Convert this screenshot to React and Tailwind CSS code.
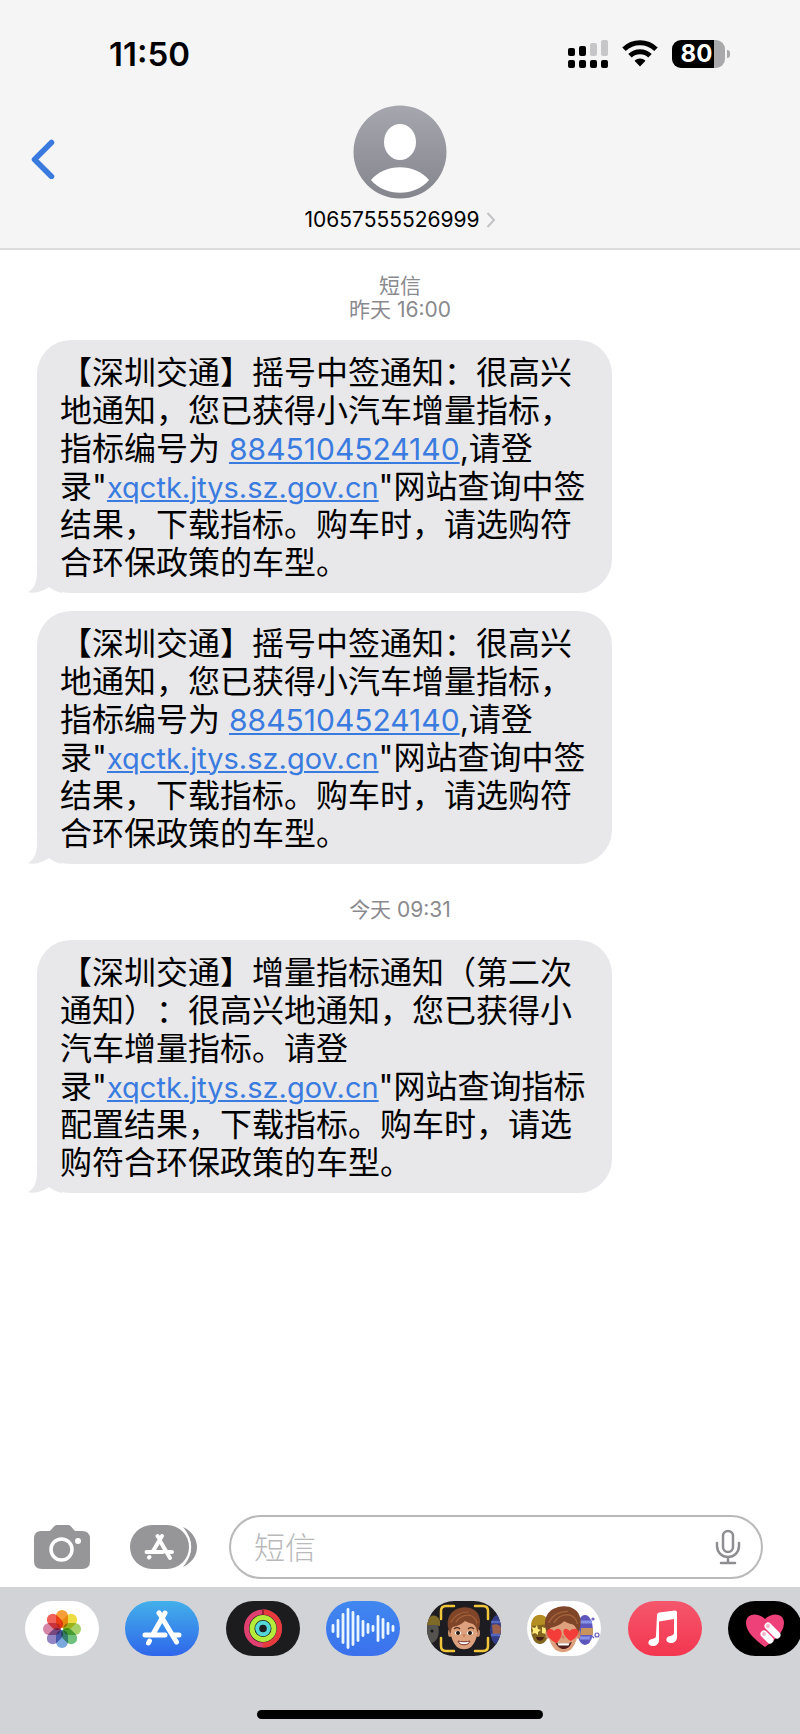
import { useState } from 'react'

const MESSAGE_GROUPS = [
  {
    label: '短信',
    time: '昨天 16:00',
    messages: [
      { id: 1, kind: 'lottery', code: '8845104524140' },
      { id: 2, kind: 'lottery', code: '8845104524140' },
    ],
  },
  {
    time: '今天 09:31',
    messages: [{ id: 3, kind: 'reminder' }],
  },
]

const PETALS = [
  { angle: 0, color: '#f79420' },
  { angle: 45, color: '#ecd830' },
  { angle: 90, color: '#9bcb5a' },
  { angle: 135, color: '#5fb96f' },
  { angle: 180, color: '#6d9fdc' },
  { angle: 225, color: '#8579bd' },
  { angle: 270, color: '#d0799f' },
  { angle: 315, color: '#ee5047' },
]

// [x, half height]
const WAVE_BARS = [
  [7, 3], [12, 8], [17, 14], [22, 19], [27, 16], [32, 12], [37, 7], [42, 4], [47, 2], [52, 12], [57, 9], [62, 5], [67, 2],
]

function StatusBar() {
  return (
    <div className="flex h-[96px] items-center justify-between pl-[109px] pr-[70px] pt-3">
      <time className="text-[33px] font-semibold leading-10">11:50</time>
      <div className="flex items-center gap-[14px]">
        <svg width="40" height="28" viewBox="0 0 40 28" aria-label="信号">
          <rect x="0" y="8" width="7" height="8" rx="2" />
          <rect x="11" y="6" width="7" height="10" rx="2" />
          <rect x="22" y="3" width="7" height="13" rx="2" fill="#c6c6c8" />
          <rect x="33" y="0" width="7" height="16" rx="2" fill="#c6c6c8" />
          <rect x="0" y="20" width="7" height="8" rx="2" />
          <rect x="11" y="20" width="7" height="8" rx="2" />
          <rect x="22" y="20" width="7" height="8" rx="2" />
          <rect x="33" y="20" width="7" height="8" rx="2" />
        </svg>
        <svg width="36" height="28" viewBox="0 0 36 28" fill="none" stroke="#000" strokeWidth="5" aria-label="无线网络">
          <path d="M2 9.3A23 23 0 0 1 34 9.3" />
          <path d="M8 15.7A14.5 14.5 0 0 1 28 15.7" />
          <path d="M12.5 20.8a8 8 0 0 1 11 0L18 26.5z" fill="#000" stroke="none" />
        </svg>
        <div className="flex items-center gap-[2px]">
          <div className="flex h-7 w-[53px] items-center justify-center rounded-[9px] bg-linear-to-r from-black from-80% to-[#a9a9ab] to-80% pr-1 text-[24px] font-bold leading-7 text-white">80</div>
          <span className="h-2 w-[3px] rounded-r-full bg-[#a9a9ab]" />
        </div>
      </div>
    </div>
  )
}

function Header() {
  return (
    <header className="border-b-2 border-[#dcdcdd] bg-[#f5f5f5]">
      <StatusBar />
      <div className="grid h-[152px] grid-cols-[1fr_auto_1fr] items-start">
        <button aria-label="返回" className="mt-[43px] ml-[31px] justify-self-start">
          <svg width="24" height="40" viewBox="0 0 24 40" fill="none" stroke="#3a79dd" strokeWidth="5.500" strokeLinecap="round" strokeLinejoin="round">
            <path d="M20.500 3.500L3.500 20.500L20.500 37.500" />
          </svg>
        </button>
        <button className="mt-[9px] flex flex-col items-center gap-[9px]">
          <svg width="94" height="94" viewBox="0 0 94 94">
            <defs>
              <linearGradient id="avatar" x1="0" y1="0" x2="0" y2="1">
                <stop offset="0" stopColor="#a5a6ae" />
                <stop offset="1" stopColor="#85868d" />
              </linearGradient>
            </defs>
            <circle cx="47" cy="47" r="46.500" fill="url(#avatar)" />
            <ellipse cx="47" cy="37" rx="16" ry="18" fill="#fff" />
            <path d="M18 75C32 58 62 58 76 75C62 92 32 92 18 75z" fill="#fff" />
          </svg>
          <span className="flex items-center gap-[6px] text-[21px] leading-6">
            10657555526999
            <svg width="10" height="16" viewBox="0 0 10 16" fill="none" stroke="#c3c3c6" strokeWidth="2">
              <path d="M1.500 1L8 8L1.500 15" />
            </svg>
          </span>
        </button>
      </div>
    </header>
  )
}

function MessageText({ message }) {
  const linkStyle = 'leading-none text-[#3a7be0] underline decoration-2 underline-offset-2'
  const site = <a href="#site" className={`text-[29px] ${linkStyle}`}>xqctk.jtys.sz.gov.cn</a>
  if (message.kind === 'reminder') {
    return (
      <>【深圳交通】增量指标通知（第二次通知）：很高兴地通知，您已获得小汽车增量指标。请登录"{site}"网站查询指标配置结果，下载指标。购车时，请选购符合环保政策的车型。</>
    )
  }
  return (
    <>【深圳交通】摇号中签通知：很高兴地通知，您已获得小汽车增量指标，指标编号为 <a href="#code" className={`text-[30px] ${linkStyle}`}>{message.code}</a>,请登录"{site}"网站查询中签结果，下载指标。购车时，请选购符合环保政策的车型。</>
  )
}

function Bubble({ message }) {
  return (
    <div className="relative w-[575px] max-w-full rounded-[34px] bg-[#e8e8ea] pt-[14px] pr-[20px] pb-[11px] pl-[23px]">
      <svg width="34" height="30" viewBox="0 0 34 30" fill="#e8e8ea" className="absolute bottom-0 -left-[9px]">
        <path d="M9 0V9C9 19 6 26 0 29C7 31 15 28 21 24C25 27 29 29 34 30V0z" />
      </svg>
      <p className="relative text-[32px] leading-[38px] [text-spacing-trim:space-all]">
        <MessageText message={message} />
      </p>
    </div>
  )
}

function Composer() {
  const [text, setText] = useState('')
  return (
    <form className="flex items-center pr-[37px] pb-2 pl-[33px]" onSubmit={(e) => e.preventDefault()}>
      <button type="button" aria-label="相机">
        <svg width="58" height="46" viewBox="0 0 58 46">
          <path d="M8 7h8c3 0 4-6 8-6h11c4 0 5 6 8 6h6q8 0 8 8v22q0 8-8 8H9q-8 0-8-8V15q0-8 7-8z" fill="#969698" />
          <circle cx="28.500" cy="25.500" r="10.500" fill="none" stroke="#fff" strokeWidth="3.500" />
          <circle cx="45" cy="17" r="3" fill="#fff" />
        </svg>
      </button>
      <button type="button" aria-label="应用" className="ml-[38px]">
        <svg width="70" height="46" viewBox="0 0 70 46">
          <path d="M54 3C65 8 68 17 68 23S65 38 54 43C65 30 65 16 54 3z" fill="#969698" />
          <rect x="0" y="0" width="62" height="46" rx="23" fill="#fff" />
          <rect x="1" y="1" width="59" height="44" rx="22" fill="#969698" />
          <g stroke="#fff" strokeWidth="4" strokeLinecap="round" fill="none">
            <path d="M28.500 12L30 14M33 12L23.500 28M30.500 16L41 34M17.500 28H34M39 28H43" />
            <path d="M20 33.500L20.500 33" />
          </g>
        </svg>
      </button>
      <div className="ml-[30px] flex h-16 min-w-0 flex-1 items-center rounded-full border-2 border-[#b9b9bb] bg-white pr-[20px] pl-[23px]">
        <input value={text} onChange={(e) => setText(e.target.value)} placeholder="短信" aria-label="短信"
          className="h-12 min-w-0 flex-1 bg-transparent text-[31px] font-light outline-none placeholder:text-[#b9b9bb]" />
        <svg width="26" height="36" viewBox="0 0 26 36" fill="none" stroke="#8e8e92" strokeWidth="2.500" strokeLinecap="round">
          <rect x="8" y="2" width="10" height="21" rx="5" />
          <path d="M2 14v3a11 11 0 0 0 22 0v-3M13 28v6M6 34h14" />
        </svg>
      </div>
    </form>
  )
}

function PhotosIcon() {
  return (
    <g className="isolate">
      <rect width="74" height="55" fill="#fff" />
      {PETALS.map(p => (
        <rect key={p.angle} x="31" y="9" width="12" height="18" rx="6" fill={p.color} fillOpacity="0.9" transform={`rotate(${p.angle} 37 28)`} className="mix-blend-multiply" />
      ))}
    </g>
  )
}

function StoreIcon() {
  return (
    <>
      <defs>
        <linearGradient id="store" x1="0" y1="0" x2="0" y2="1">
          <stop offset="0" stopColor="#43b0ea" />
          <stop offset="1" stopColor="#2f66ea" />
        </linearGradient>
      </defs>
      <rect width="74" height="55" fill="url(#store)" />
      <g stroke="#fff" strokeWidth="5" strokeLinecap="round" fill="none">
        <path d="M34 12L36.500 15.500M40 12L27.500 34M36.500 16L51.500 41M20 34H40M48 34H54" />
        <path d="M24.500 40L23.500 42" />
      </g>
    </>
  )
}

function RingsIcon() {
  return (
    <>
      <rect width="74" height="55" fill="#1c1c1e" />
      <g fill="none" strokeWidth="5">
        <circle cx="37" cy="27.500" r="16.500" stroke="#e0406f" />
        <path d="M37 11a16.500 16.500 0 0 1 0 33" stroke="#e63a3c" />
        <circle cx="37" cy="27.500" r="11" stroke="#b5ec3c" />
        <circle cx="37" cy="27.500" r="5.800" stroke="#52d6d8" strokeWidth="4" />
      </g>
      <path d="M37 9v5" stroke="#7d1730" strokeWidth="1.500" />
    </>
  )
}

function WaveIcon() {
  return (
    <>
      <defs>
        <linearGradient id="wave" x1="0" y1="0" x2="0" y2="1">
          <stop offset="0" stopColor="#4087f0" />
          <stop offset="1" stopColor="#3b71ec" />
        </linearGradient>
      </defs>
      <rect width="74" height="55" fill="url(#wave)" />
      {WAVE_BARS.map(([x, h]) => (
        <path key={x} d={`M${x} ${27.5 - h}V${27.5 + h}`} stroke="#e9f6ff" strokeWidth="2.800" strokeLinecap="round" />
      ))}
    </>
  )
}

function Hair() {
  return (
    <>
      <path d="M-13 5C-18-2-18-14-9-19C-1-24 12-22 15-13C17-8 16-1 13 4C13 0 12-3 9-5C5-6 3-7 1-8C-3-4-8-3-11-2C-13-1-13 2-13 5z" fill="#7f4528" />
      <path d="M-13-7C-9-14-3-17 4-17M-8-7C-5-12-1-14 5-14C9-13 12-10 13-6" fill="none" stroke="#a5633b" strokeWidth="1.200" strokeLinecap="round" />
    </>
  )
}

function Face() {
  return (
    <>
      <ellipse cx="-14" cy="4" rx="2" ry="4" fill="#c98a68" />
      <ellipse cx="14" cy="4" rx="2" ry="4" fill="#c98a68" />
      <path d="M-13-9C-6-15 7-15 13-9C15 2 13 12 7 18C3 21-3 21-7 18C-13 12-15 2-13-9z" fill="#dda27d" />
      <path d="M-1 5C-3 9 3 9 1 5" fill="#c88662" />
    </>
  )
}

function MemojiIcon() {
  return (
    <>
      <rect width="74" height="55" fill="#1d1c20" />
      <path d="M0 21C2 13 10 12 13 20V25H0z" fill="#7e6a26" />
      <path d="M0 24H11C13 32 11 40 5 42L0 38z" fill="#55534f" />
      <circle cx="5" cy="30" r="1.500" fill="#161616" />
      <ellipse cx="71" cy="29" rx="8" ry="15" fill="#343c86" />
      <path d="M65 24C69 22 74 24 74 27V34H66z" fill="#9c604b" />
      <path d="M64 21H74M64 34H74" stroke="#5367bd" strokeWidth="2.500" />
      <g transform="translate(37 28)">
        <Face />
        <Hair />
        <path d="M-10 0C-8-2-6-2-4 0M4 0C6-2 8-2 10 0" fill="none" stroke="#5c3420" strokeWidth="1.500" />
        <ellipse cx="-6" cy="4" rx="3" ry="2" fill="#fff" />
        <ellipse cx="6" cy="4" rx="3" ry="2" fill="#fff" />
        <circle cx="-6" cy="4" r="2" fill="#27150f" />
        <circle cx="6" cy="4" r="2" fill="#27150f" />
        <path d="M-6 12C-3 13 3 13 6 12C5 17-5 17-6 12z" fill="#fff" stroke="#7b372c" />
      </g>
      <path d="M14 18V10Q14 5 19 5H27M48 5H56Q61 5 61 10V18M61 37V45Q61 50 56 50H48M27 50H19Q14 50 14 45V37" fill="none" stroke="#f0c63c" strokeWidth="2.500" strokeLinecap="round" />
    </>
  )
}

function StickersIcon() {
  return (
    <>
      <rect width="74" height="55" fill="#fff" />
      <ellipse cx="13" cy="29" rx="9" ry="14" fill="#806420" />
      <path d="M4 25C4 11 20 10 22 23z" fill="#b48e22" />
      <path d="M5 26l3 1 2-3 1 4 3 1-3 2v3l-3-2-3 1 1-3zM15 26l3 1 2-3 1 4-2 5-4-1z" fill="#ffe979" />
      <path d="M9 36h8c-1 5-7 5-8 0z" fill="#451f17" />
      <ellipse cx="58" cy="29" rx="8" ry="15" fill="#5d56bd" />
      <path d="M54 27h12v7H54z" fill="#c8935c" />
      <path d="M53 21h12M53 37h12" stroke="#8793e7" strokeWidth="3" />
      <g fill="none" stroke="#6257bb" strokeWidth="1.200">
        <circle cx="70" cy="34" r="2" />
        <circle cx="61" cy="41" r="1" />
        <circle cx="66" cy="18" r="1" />
        <path d="M67 37q-3-3-4 1" />
      </g>
      <g transform="translate(36 29) scale(1.1)">
        <Face />
        <path d="M-7 11C-3 13 4 13 8 11C6 19-4 20-7 11z" fill="#511e1b" />
        <path d="M-5 12H6l-1 2H-4z" fill="#fff" />
        <Hair />
        <path d="M-6 12C-20 5-14-5-8 1C-4-5 4 3-6 12z" fill="#f43d39" />
        <path d="M7 10C-4 3 1-5 6 1C12-5 20 3 7 10z" fill="#f43d39" />
      </g>
    </>
  )
}

function MusicIcon() {
  return (
    <>
      <defs>
        <linearGradient id="music" x1="0" y1="0" x2="0" y2="1">
          <stop offset="0" stopColor="#f4576c" />
          <stop offset="1" stopColor="#f43650" />
        </linearGradient>
      </defs>
      <rect width="74" height="55" fill="url(#music)" />
      <path d="M29 14Q29 12 31 11.500L47 9.500Q49 9.500 49 11.500V36C49 40 46 42 43 42C37 42 37 36 42 35C45 34 46 34 46 31V18L31 20.500V39C31 43 28 45 25 45C19 45 19 39 24 38C27 37 28 37 28 34z" fill="#fff" />
    </>
  )
}

function TouchIcon() {
  return (
    <>
      <defs>
        <clipPath id="heart">
          <path d="M37 46C29 40 18 32 18 22C18 12 30 11 37 18C44 11 56 12 56 22C56 32 45 40 37 46z" />
        </clipPath>
      </defs>
      <rect width="74" height="55" fill="#000" />
      <g clipPath="url(#heart)">
        <rect width="74" height="55" fill="#ef4179" />
      </g>
      <path d="M40 25L49 34M36 33L42 39" stroke="#fff" strokeWidth="7" strokeLinecap="round" />
      <circle cx="40" cy="25" r="2" fill="#f5b2c8" />
      <circle cx="36" cy="33" r="2" fill="#f5b2c8" />
    </>
  )
}

const APPS = [
  { name: '照片', Icon: PhotosIcon },
  { name: '商店', Icon: StoreIcon },
  { name: '健身', Icon: RingsIcon },
  { name: '音频', Icon: WaveIcon },
  { name: '拟我表情', Icon: MemojiIcon },
  { name: '表情贴纸', Icon: StickersIcon },
  { name: '音乐', Icon: MusicIcon },
  { name: '触控', Icon: TouchIcon },
]

function AppDrawer() {
  return (
    <footer className="flex h-[147px] flex-col items-center justify-between overflow-hidden bg-[#d2d3d7] pt-[14px] pb-[15px]">
      <div className="flex w-full justify-between pl-[25px]">
        {APPS.map(({ name, Icon }) => (
          <button key={name} aria-label={name} className="h-[55px] w-[74px] shrink-0 overflow-hidden rounded-full last:-mr-[2px]">
            <svg width="74" height="55" viewBox="0 0 74 55"><Icon /></svg>
          </button>
        ))}
      </div>
      <div className="h-[9px] w-[286px] rounded-full bg-black" />
    </footer>
  )
}

export default function App() {
  return (
    <div className="flex min-h-screen flex-col overflow-x-hidden bg-white font-['Inter','Noto_Sans_CJK_SC',sans-serif] text-black" lang="zh-CN">
      <Header />
      <main className="flex-1 pr-6 pl-[37px]">
        {MESSAGE_GROUPS.map(group => (
          <section key={group.time} className="pt-6 pb-[10px]">
            <h2 className="-ml-[37px] -mr-6 pb-[18px] text-center text-[21px] leading-6 text-[#8a8a8e]">
              {group.label && <span className="block">{group.label}</span>}
              <time>{group.time}</time>
            </h2>
            <div className="flex flex-col gap-[18px]">
              {group.messages.map(m => <Bubble key={m.id} message={m} />)}
            </div>
          </section>
        ))}
      </main>
      <Composer />
      <AppDrawer />
    </div>
  )
}
